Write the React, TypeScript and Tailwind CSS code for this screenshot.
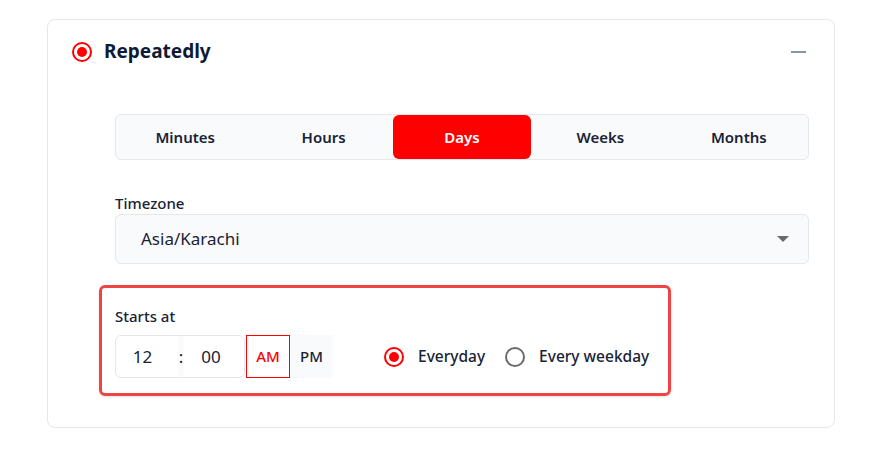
import { useState } from "react"

const tabs = ["Minutes", "Hours", "Days", "Weeks", "Months"]

function Radio({ checked }: { checked: boolean }) {
  if (checked) {
    return (
      <span className="flex h-[20px] w-[20px] shrink-0 items-center justify-center rounded-full border-2 border-[#ff0000]">
        <span className="h-[10px] w-[10px] rounded-full bg-[#ff0000]" />
      </span>
    )
  }
  return <span className="h-[20px] w-[20px] shrink-0 rounded-full border-2 border-[#6b6b6b]" />
}

export default function App() {
  const [tab, setTab] = useState("Days")
  const [ampm, setAmpm] = useState("AM")
  const [mode, setMode] = useState("everyday")

  return (
    <main className="min-h-screen bg-white pt-[19px] pl-[47px] text-[#1a2236]" style={{ fontFamily: '"Noto Sans", "Open Sans", sans-serif' }}>
      <div className="w-[788px] h-[409px] rounded-lg border border-[#e5e7eb] bg-white">
        {/* header */}
        <div className="flex h-[63px] items-center pl-[24px] pr-[28px]">
          <Radio checked />
          <h1 className="ml-[12px] text-[19px] font-bold text-[#0f1b35]">Repeatedly</h1>
          <span className="ml-auto h-[2px] w-[15px] bg-[#8b93a8]" />
        </div>

        <div className="ml-[67px] mr-[25px] mt-[31px]">
          {/* interval tabs */}
          <div className="grid h-[46px] grid-cols-5 rounded-md border border-[#e5e7eb] bg-[#f9fafb]">
            {tabs.map((t) => (
              <button
                key={t}
                onClick={() => setTab(t)}
                className={
                  t === tab
                    ? "rounded-md bg-[#ff0000] text-[15px] font-semibold text-white"
                    : "text-[15px] font-semibold text-[#1a2236]"
                }
              >
                {t}
              </button>
            ))}
          </div>

          {/* timezone */}
          <label className="mt-[33px] block text-[15px] font-medium leading-[21px]">Timezone</label>
          <div className="flex h-[50px] items-center rounded-md border border-[#e5e7eb] bg-[#f9fafb] pl-[25px] pr-[19px]">
            <span className="text-[17px] text-[#1a2236]">Asia/Karachi</span>
            <span className="ml-auto h-0 w-0 border-x-[6px] border-t-[6px] border-x-transparent border-t-[#6b6b6b]" />
          </div>

          {/* starts at */}
          <div className="-ml-[16px] mt-[21px] h-[111px] w-[572px] rounded-md border-[3px] border-[#ef4444] pl-[13px] pt-[18px] shadow-sm">
            <div className="text-[15px] font-medium leading-[20px]">Starts at</div>
            <div className="mt-[9px] flex h-[43px] items-stretch">
              <div className="flex w-[130px] items-stretch rounded-md border border-[#e5e7eb] bg-white">
                <span className="flex w-[62px] items-center justify-center pr-[9px] text-[17px]">12</span>
                <span className="flex w-[6px] items-center justify-center bg-[#fbfbfb] text-[17px]">:</span>
                <span className="flex flex-1 items-center justify-center pr-[6px] text-[17px]">00</span>
              </div>
              <button
                onClick={() => setAmpm("AM")}
                className={
                  ampm === "AM"
                    ? "ml-px w-[44px] border border-[#ff0000] bg-white text-[15px] font-medium text-[#ff0000]"
                    : "ml-px w-[44px] bg-[#f9fafb] text-[15px] font-medium"
                }
              >
                AM
              </button>
              <button
                onClick={() => setAmpm("PM")}
                className={
                  ampm === "PM"
                    ? "w-[43px] border border-[#ff0000] bg-white text-[15px] font-medium text-[#ff0000]"
                    : "w-[43px] bg-[#f9fafb] text-[15px] font-medium"
                }
              >
                PM
              </button>

              <button onClick={() => setMode("everyday")} className="ml-[51px] flex items-center gap-[14px]">
                <Radio checked={mode === "everyday"} />
                <span className="text-[15.5px] font-medium">Everyday</span>
              </button>
              <button onClick={() => setMode("weekday")} className="ml-[20px] flex items-center gap-[14px]">
                <Radio checked={mode === "weekday"} />
                <span className="text-[15.5px] font-medium">Every weekday</span>
              </button>
            </div>
          </div>
        </div>
      </div>
    </main>
  )
}
